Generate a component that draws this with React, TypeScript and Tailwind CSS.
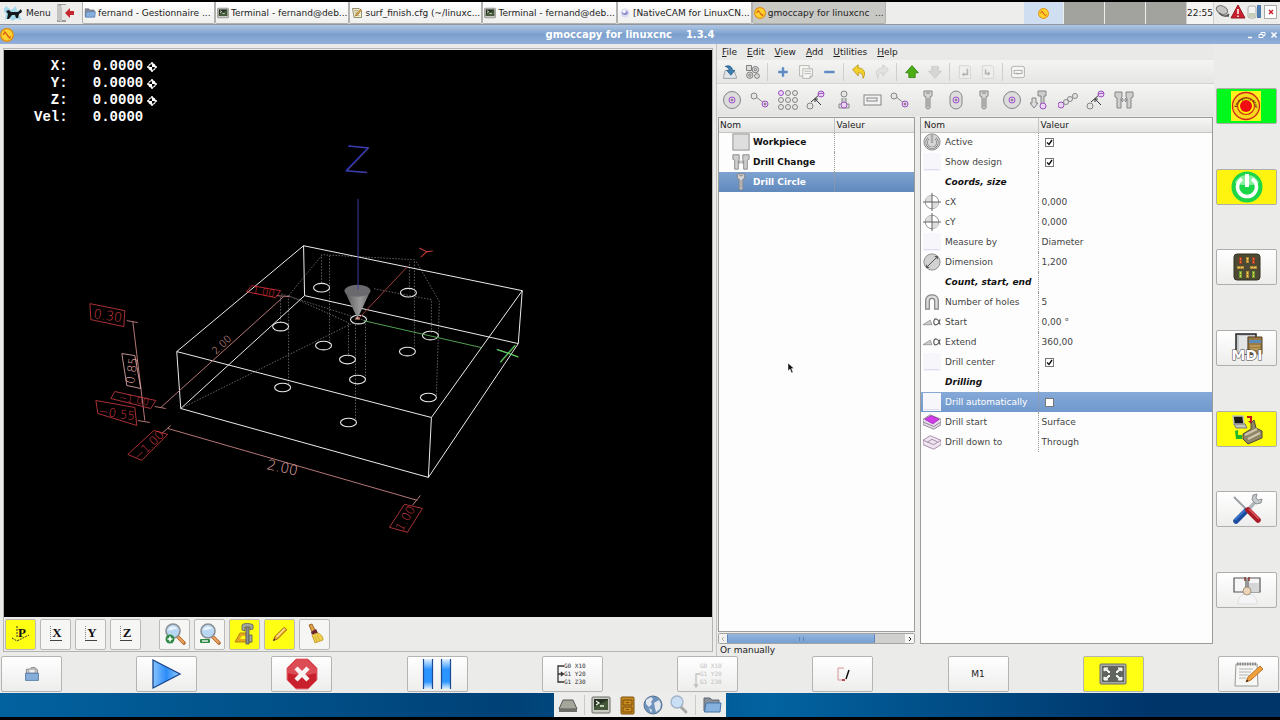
import React from 'react'

type IconProps = { className?: string }

/* ---------- small shared icons ---------- */

function CncLogo({ className = 'size-3' }: IconProps) {
    return (
        <svg viewBox="0 0 16 16" className={className} aria-hidden="true">
            <circle cx="8" cy="8" r="7.2" fill="#ffd22e" stroke="#e08a10" strokeWidth="1.4" />
            <path d="M3.500 8c1-3 3-3 4-1l2 3c1 1.500 2 1 2.800-.500M5 4l6.500 8" fill="none" stroke="#dc5a10" strokeWidth="1.400" />
        </svg>
    )
}

function FolderIcon({ className = 'size-3' }: IconProps) {
    return (
        <svg viewBox="0 0 20 20" className={className} aria-hidden="true">
            <path d="M2 3h6l2 2h7v11H2z" fill="#8a9099" stroke="#5d6670" />
            <path d="M4 8h15l-1 9H2.500z" fill="#86b0de" stroke="#4573a8" />
        </svg>
    )
}

function TerminalIcon({ className = 'size-3' }: IconProps) {
    return (
        <svg viewBox="0 0 20 20" className={className} aria-hidden="true">
            <rect x="1" y="2" width="18" height="16" rx="1" fill="#c9cbc4" stroke="#6b6d66" />
            <rect x="3" y="4" width="14" height="11" fill="#263323" />
            <path d="M3 12L17 5v10H3z" fill="#44573a" />
            <path d="M5 6l3 2-3 2M9 11h4" stroke="#eef5e4" strokeWidth="1.300" fill="none" />
        </svg>
    )
}

function NoteIcon({ className = 'size-3' }: IconProps) {
    return (
        <svg viewBox="0 0 16 16" className={className} aria-hidden="true">
            <path d="M2 2h9l3 3v9H4z" fill="#f3eecb" stroke="#77704a" />
            <path d="M4 5h6M5 8h6M6 11h5" stroke="#8a8467" />
            <path d="M14 4L8 11l-2 1 .500-2L13 3z" fill="#e8a53a" stroke="#8a5a12" strokeWidth=".7" />
        </svg>
    )
}

function PageIcon({ className = 'size-3' }: IconProps) {
    return (
        <svg viewBox="0 0 16 16" className={className} aria-hidden="true">
            <circle cx="8" cy="8" r="6" fill="#dcdcf0" />
            <path d="M4 9c0-4 7-6 8-1-1 3-5 4-8 1z" fill="#8f8fd0" />
            <circle cx="7" cy="6" r="2" fill="#fff" />
        </svg>
    )
}

function Magnifier({ children, className = 'size-6' }: IconProps & { children?: React.ReactNode }) {
    return (
        <svg viewBox="0 0 24 24" className={className} aria-hidden="true">
            <path d="M14 14l7 7" stroke="#a9632a" strokeWidth="3.600" strokeLinecap="round" />
            <path d="M15 15l5.500 5.500" stroke="#f0a35c" strokeWidth="2" strokeLinecap="round" />
            <circle cx="10" cy="9" r="7" fill="#b9d6f2" stroke="#8c8f92" strokeWidth="1.600" />
            <path d="M5 8c1-4 7-5 10-1-3-1-6 2-10 1z" fill="#e9f3fc" />
            {children}
        </svg>
    )
}

/* ---------- task bar ---------- */

const tasks = [
    { label: 'fernand - Gestionnaire ...', icon: <FolderIcon /> },
    { label: 'Terminal - fernand@deb...', icon: <TerminalIcon /> },
    { label: 'surf_finish.cfg (~/linuxc...', icon: <NoteIcon /> },
    { label: 'Terminal - fernand@deb...', icon: <TerminalIcon /> },
    { label: '[NativeCAM for LinuxCN...', icon: <PageIcon /> },
    { label: 'gmoccapy for linuxcnc  ...', icon: <CncLogo />, active: true },
]

function TaskBar() {
    return (
        <div className="flex h-[23px] shrink-0 items-center border-b border-[#8e959c] bg-[#ededec]">
            <button className="flex h-full w-[51px] items-center gap-[2px] pl-1">
                <svg viewBox="0 0 20 16" className="h-4 w-5 shrink-0" aria-hidden="true">
                    <path d="M2 1l5 4 5-4 1 5 5-1-3 5 3 5-6-1-4 2-2-3-5 2 1-6-3-4z" fill="#a4d8ea" />
                    <path d="M2 6l3-1 2 2h7l3-3 1 3-3 2-1 4h-2l-1-3H8l-3 4H3l1-5z" fill="#15181a" />
                </svg>
                Menu
            </button>
            <button aria-label="Leave" className="flex h-full w-[31px] items-center pl-1">
                <svg viewBox="0 0 22 18" className="h-[18px] w-[22px]" aria-hidden="true">
                    <path d="M2 0h9v18H2z" fill="#9b9b99" />
                    <path d="M6 1h8v15H6z" fill="#e6e6e4" />
                    <path d="M2 0l5 3v15l-5-2z" fill="#c3c3c1" />
                    <path d="M10 9l5-5v3h4v4h-4v3z" fill="#c6262e" />
                </svg>
            </button>
            <div className="flex h-full items-center">
                {tasks.map((t, i) => (
                    <button
                        key={i}
                        className={`flex h-full w-[133px] min-w-max items-center gap-[2px] whitespace-pre rounded-b-[2px] border-x border-b border-[#b1b1af] px-px ${t.active ? 'bg-[#c8c8c5]' : 'bg-linear-to-b from-white to-[#efefee]'}`}
                    >
                        <span className="shrink-0">{t.icon}</span>
                        {t.label}
                    </button>
                ))}
            </div>
            <div className="ml-auto flex h-full gap-px">
                <button aria-label="Workspace 1" className="flex w-[39px] items-center justify-center bg-[#cfdff1]">
                    <CncLogo className="size-[11px]" />
                </button>
                <button aria-label="Workspace 2" className="w-10 bg-[#a2a29e]" />
                <button aria-label="Workspace 3" className="w-10 bg-[#a2a29e]" />
                <button aria-label="Workspace 4" className="w-10 bg-[#a2a29e]" />
            </div>
            <time className="flex h-full w-7 items-center justify-center border-x border-[#cfcfcd] bg-[#f4f4f3]">22:55</time>
            <svg viewBox="0 0 66 22" className="h-[22px] w-[66px]" aria-hidden="true">
                <ellipse cx="8" cy="8" rx="6" ry="4" transform="rotate(25 8 8)" fill="#c5c6c2" stroke="#777" />
                <path d="M5 11c4 4 8 4 10 1M9 14h6" stroke="#555" strokeWidth="1.500" fill="none" />
                <path d="M24 3l7 13H17z" fill="#c8202c" stroke="#971620" />
                <path d="M24 7v5M24 13.500v1.500" stroke="#fff" strokeWidth="1.500" />
                <rect x="34" y="4" width="8" height="12" rx="2" fill="#f4f4f4" stroke="#aaa" />
                <path d="M35 11h6v4h-6z" fill="#c5cdb6" />
                <rect x="43" y="3" width="4" height="13" fill="#4f7cae" />
                <rect x="50.500" y="3.500" width="12" height="13" fill="#fff" stroke="#a9a9a9" />
                <path d="M55 8l4 4M59 8l-4 4" stroke="#c8202c" strokeWidth="1.500" />
            </svg>
        </div>
    )
}

function TitleBar() {
    return (
        <header className="flex h-[19px] shrink-0 items-center bg-linear-to-b from-[#b0c7e4] via-[#7ba0cc] to-[#93afdb] pr-[2px]">
            <CncLogo className="size-[14px]" />
            <h1 className="flex-1 whitespace-pre text-center text-[10px] font-bold text-white">gmoccapy for linuxcnc    1.3.4</h1>
            <div className="flex gap-1">
                <button aria-label="Minimize">
                    <svg viewBox="0 0 8 8" className="size-2"><path d="M2 6.500h4" stroke="#fff" strokeWidth="1.500" /></svg>
                </button>
                <button aria-label="Restore">
                    <svg viewBox="0 0 8 8" className="size-2"><path d="M1 3.500h4v3H1zM3 3.500v-2h4v3H5" stroke="#fff" fill="none" /></svg>
                </button>
                <button aria-label="Close">
                    <svg viewBox="0 0 8 8" className="size-2"><path d="M1.500 1.500l5 5M6.500 1.500l-5 5" stroke="#fff" strokeWidth="1.500" /></svg>
                </button>
            </div>
        </header>
    )
}

/* ---------- 3D preview ---------- */

const holes = [
    [322, 288], [409, 293], [281, 327], [359, 320], [431, 336], [348, 360],
    [324, 346], [408, 352], [283, 388], [358, 380], [349, 423], [429, 398],
]

const rapids =
    'M322 283V255L415 260V350M330 256V345M410 290V262M417 262L440 302L437 397M432 333V300L374 289M281 323V297M289 296V385M289 296L322 256M289 296L349 323V357M356 325V420M366 324V380M181 409L356 322M366 321L281 294'

const labels = [
    { text: '0.30', x: 108, y: 316, a: 8, size: 13, box: '90,304 125,311 124,327 91,320', color: '#d23c42' },
    { text: '0.85', x: 132, y: 371, a: -82, size: 12, box: '122,354 135,356 141,389 127,386', color: '#f0b4b4' },
    { text: '−1.00', x: 134, y: 400, a: 10, size: 10, box: '115,392 156,401 151,409 111,399', color: '#d23c42' },
    { text: '−0.55', x: 117, y: 414, a: 9, size: 12, box: '96,401 135,408 137,426 98,414', color: '#d23c42' },
    { text: '−1.00', x: 149, y: 446, a: -44, size: 12, box: '154,431 168,435 142,461 128,455', color: '#d23c42' },
    { text: '1.00', x: 264, y: 292, a: 10, size: 10, box: '252,286 281,291 276,298 247,292', color: '#e03038' },
    { text: '1.00', x: 406, y: 519, a: -60, size: 12, box: '405,505 423,509 408,533 390,528', color: '#d23c42' },
    { text: '2.00', x: 283, y: 468, a: 12, size: 14, color: '#eab0b0' },
    { text: '2.00', x: 222, y: 345, a: -44, size: 10, color: '#eab0b0' },
]

function Preview() {
    return (
        <div className="relative min-h-[400px] flex-1 overflow-hidden bg-black">
            <svg viewBox="4 50 709 567" preserveAspectRatio="xMinYMin meet" className="absolute inset-0 size-full" aria-hidden="true">
                <defs>
                    <linearGradient id="cone">
                        <stop offset="0" stopColor="#555" />
                        <stop offset=".6" stopColor="#9a9a9a" />
                        <stop offset="1" stopColor="#666" />
                    </linearGradient>
                </defs>
                <path d={rapids} fill="none" stroke="#7a7a7a" strokeWidth="0.800" strokeDasharray="1.500 1.500" />
                <path
                    d="M304 246L523 291L432 418L177 352ZM305 296L519 344L429 478L181 409ZM304 246L305 296M523 291L519 344M432 418L429 478M177 352L181 409"
                    fill="none" stroke="#ececec" strokeWidth="1"
                />
                <path d="M133 322L145 421M127 321L138 323M138 421L150 423M161 408L284 297M155 407L166 409M277 296L290 297M168 429L418 501M162 434L171 426M413 506L421 496" stroke="#b47676" fill="none" />
                {holes.map(([x, y]) => (
                    <ellipse key={`${x}-${y}`} cx={x} cy={y} rx="8" ry="4.300" fill="none" stroke="#e8e8e8" strokeWidth="1.100" />
                ))}
                <path d="M345 291L358 319L371 291Z" fill="url(#cone)" />
                <ellipse cx="358" cy="291" rx="13" ry="6" fill="#6a6a6e" />
                <path d="M358.500 199V290" stroke="#3d3d9e" />
                <path d="M359 319L408 267" stroke="#a23c44" />
                <path d="M364 321L482 348" stroke="#4fa050" />
                <path d="M355 320l3-3 3 3z" fill="#e0a090" />
                <g fontFamily="DejaVu Sans, sans-serif" fontWeight="200" textAnchor="middle" dominantBaseline="central">
                    <text x="358" y="160" fontSize="36" fill="#3c3cac" transform="rotate(5 358 160)">Z</text>
                    <text x="427" y="252" fontSize="18" fill="#d04040" transform="rotate(-98 427 252)">Y</text>
                    <text x="508" y="354" fontSize="26" fill="#62c864" transform="rotate(75 508 354)">X</text>
                    {labels.map((l, i) => (
                        <g key={i}>
                            {l.box && <polygon points={l.box} fill="none" stroke={l.color} opacity=".8" />}
                            <text x={l.x} y={l.y} fontSize={l.size} fill={l.color} transform={`rotate(${l.a} ${l.x} ${l.y})`}>{l.text}</text>
                        </g>
                    ))}
                </g>
            </svg>
            <div className="absolute left-[30px] top-2 whitespace-pre font-['Liberation_Mono',monospace] text-[14px] font-bold leading-[17px] text-white">
                {['  X:   0.0000', '  Y:   0.0000', '  Z:   0.0000'].map((row) => (
                    <div key={row} className="flex items-center">
                        {row}
                        <svg viewBox="0 0 10 10" className="ml-1 size-[10px]" aria-hidden="true">
                            <path d="M5 0v10M0 5h10" stroke="#fff" strokeWidth="1.500" />
                            <circle cx="5" cy="5" r="3.800" fill="#fff" />
                            <path d="M5 5V2.200A2.800 2.800 0 002.200 5zM5 5v2.800A2.800 2.800 0 007.800 5z" fill="#000" />
                        </svg>
                    </div>
                ))}
                <div>Vel:   0.0000</div>
            </div>
        </div>
    )
}

function ViewLetter({ letter }: { letter: string }) {
    return (
        <svg viewBox="0 0 28 28" className="size-7" aria-hidden="true">
            {letter === 'P' ? (
                <path d="M10 6v12M5 18l5 3 4-2 8-4" fill="none" stroke="#333" strokeDasharray="2 1" />
            ) : (
                <>
                    <path d="M8.500 6v14" stroke="#888" strokeDasharray="1 1" />
                    <path d="M8 20.500h12" stroke="#444" />
                </>
            )}
            <text x="15" y="17" textAnchor="middle" fontFamily="Liberation Serif, serif" fontWeight="700" fontSize="13" fill="#111">{letter}</text>
        </svg>
    )
}

const toolCls = 'flex size-[31px] items-center justify-center rounded-[2px] border border-[#b9b9b7]'

function PreviewTools() {
    return (
        <div className="flex h-[34px] shrink-0 items-center gap-1 pl-px">
            {['P', 'X', 'Y', 'Z'].map((l) => (
                <button key={l} aria-label={`View ${l}`} className={`${toolCls} ${l === 'P' ? 'bg-[#ffff14]' : 'bg-[#f6f6f5]'}`}>
                    <ViewLetter letter={l} />
                </button>
            ))}
            <span className="w-[10px]" />
            <button aria-label="Zoom in" className={`${toolCls} bg-[#f6f6f5]`}>
                <Magnifier>
                    <circle cx="7" cy="17" r="4.500" fill="#2f8a48" />
                    <path d="M4.500 17h5M7 14.500v5" stroke="#fff" strokeWidth="1.600" />
                </Magnifier>
            </button>
            <button aria-label="Zoom out" className={`${toolCls} bg-[#f6f6f5]`}>
                <Magnifier>
                    <rect x="2" y="17" width="10" height="4" rx="1" fill="#2f8a48" />
                    <path d="M4 19h6" stroke="#fff" strokeWidth="1.300" />
                </Magnifier>
            </button>
            <button aria-label="Dimensions" className={`${toolCls} bg-[#ffff14]`}>
                <svg viewBox="0 0 24 24" className="size-6" aria-hidden="true">
                    <path d="M2 20l5-9h7l5 9z" fill="#e3a81c" stroke="#b88410" />
                    <path d="M7 17l2-3h3l1 3z" fill="#ffff14" />
                    <path d="M13 3h3v19h-3z" fill="#8d9296" stroke="#4d5154" strokeWidth=".8" />
                    <path d="M9 3c1-2 9-2 11 0v4l-3 1V5h-5v4L9 8zM16 13h3v7h-3z" fill="#a4a99c" stroke="#5d6154" strokeWidth=".8" />
                </svg>
            </button>
            <button aria-label="Tool path" className={`${toolCls} bg-[#ffff14]`}>
                <svg viewBox="0 0 24 24" className="size-5" aria-hidden="true">
                    <path d="M4 20l2-5L17 4l3 3L9 18z" fill="#f4b024" stroke="#9c5a26" strokeWidth="1.200" />
                    <path d="M7 15L17 5l1.500 1L9 16z" fill="#fbe28a" />
                    <path d="M4 20l1-2.500L6.500 19z" fill="#333" />
                </svg>
            </button>
            <button aria-label="Clear plot" className={`${toolCls} bg-[#f6f6f5]`}>
                <svg viewBox="0 0 24 24" className="size-6" aria-hidden="true">
                    <path d="M6 3l3-1 3 6-3 2z" fill="#e0a24a" stroke="#a0682a" />
                    <path d="M8 10l5-3 2 4-6 2z" fill="#6a2430" />
                    <path d="M9 13l6-2c4 2 5 4 5 7l-8 3c-1-3-2-5-3-8z" fill="#f0cf4a" stroke="#c8a53a" />
                    <path d="M12 14l2 6M14 13l3 6" stroke="#c8a53a" strokeWidth=".8" />
                </svg>
            </button>
        </div>
    )
}

/* ---------- NativeCAM panel ---------- */

const G = '#858585'
const V = '#9a4fc0'

const hole = (x: number, y: number, color = G, r = 3) => (
    <circle cx={x} cy={y} r={r} fill={color === V ? '#ead6f4' : '#e6e6e6'} stroke={color} strokeWidth="1" />
)

function Glyph({ name, className = 'size-5' }: { name: string; className?: string }) {
    return (
        <svg viewBox="0 0 20 20" className={className} aria-hidden="true" fill="none" stroke={G} strokeWidth="1">
            {glyphs[name]}
        </svg>
    )
}

const glyphs: Record<string, React.ReactNode> = {
    circle: <><circle cx="10" cy="10" r="8.500" fill="#dcdcdc" />{hole(10, 10, V)}<circle cx="10" cy="10" r="1" fill={V} /></>,
    line: <><path d="M5 6l10 8" />{hole(4, 6)}{hole(15, 14, V)}<circle cx="15" cy="14" r="1" fill={V} /></>,
    grid: <>{[3, 10, 17].map((y) => [3, 10, 17].map((x) => <g key={`${x}-${y}`}>{hole(x, y, x === 3 && y === 3 ? V : G, 2.5)}</g>))}</>,
    move: <><path d="M5 12l9-8M15 15L9 9M9 12V9h3" stroke="#333" />{hole(4, 16)}{hole(15, 4, V)}<path d="M12 4l6-1" stroke={V} /></>,
    pin: <><path d="M8 8v6h4V8" fill="#ccc" />{hole(10, 4)}<path d="M5 14h10v4H5z" />{hole(10, 15, V)}</>,
    rect: <><rect x="2" y="5" width="17" height="10" fill="#f2f2f2" /><rect x="5" y="8" width="10" height="3" /></>,
    drill: <path d="M6 1h8v5l-2 1v11l-2 1-2-1V7L6 6zM10 8v9M8 3h4" fill="#d4d4d4" />,
    slot: <><rect x="4" y="1" width="12" height="18" rx="6" fill="#dcdcdc" />{hole(10, 10, V)}<circle cx="10" cy="10" r="1" fill={V} /></>,
    down: <><path d="M2 8h4v5h2l-4 5-4-5h2z" fill="#ddd" /><path d="M8 1h8v5h-2v8h-3V6H8z" fill="#ccc" />{hole(13, 16, V)}</>,
    chain: <>{hole(3, 15, V)}{hole(8, 12, G, 2.5)}{hole(12, 9, G, 2.5)}{hole(17, 6, G, 2.5)}</>,
    change: <><path d="M1 2h7v5l-1 1v10H3V8L1 7zM12 2h7v5l-2 1v10h-4V8l-1-1z" fill="#cfcfcf" /><path d="M7 10h6M9 8l-2 2 2 2M11 8l2 2-2 2" /></>,
    block: <rect x="1" y="1" width="18" height="18" fill="#dedede" stroke="#8a8a8a" />,
    power: <><circle cx="10" cy="10" r="9" fill="#d6d6d6" /><path d="M6 6a6 6 0 108 0M10 2v9" stroke="#777" strokeWidth="2.500" /><path d="M6 6a6 6 0 108 0M10 2v9" stroke="#eee" /></>,
    blank: <><rect x="0" y="0" width="20" height="20" fill="#f7f7fb" stroke="none" /><path d="M1 18.500h17" stroke="#dcd4ea" /></>,
    center: <><circle cx="10" cy="10" r="7.500" fill="#fff" /><path d="M10 10V2.500A7.500 7.500 0 002.500 10zM10 10v7.500a7.500 7.500 0 007.500-7.500z" fill="#ddd" stroke="none" /><path d="M10 0v20M0 10h20" stroke="#555" /></>,
    dimension: <><circle cx="10" cy="10" r="9" fill="#d2d2d2" /><path d="M4 16L16 4M4 16v-3M4 16h3M16 4v3M16 4h-3" stroke="#444" /></>,
    holes: <path d="M3 18V8c0-8 14-8 14 0v10h-4V9c0-4-6-4-6 0v9z" fill="#ddd" strokeWidth="1.400" />,
    angle: <><path d="M0 13h10L8 8z" fill="#ccc" stroke="#999" /><path d="M19 7c-2 7-7 8-7 3s5-5 7 3" stroke="#555" strokeWidth="1.300" /></>,
    start: <><path d="M0 7l8-5 12 5v6l-8 5L0 13z" fill="#e9d9ee" /><path d="M2 7l7-4 9 4-7 5z" fill="#d23be8" stroke="#a030b8" /><path d="M0 10l12 5 8-5" /></>,
    depth: <><path d="M0 8l8-5 12 5v5l-8 5L0 13z" fill="#efe4ef" stroke="#a084a4" /><path d="M0 8l12 5 8-5M5 10l5-3 6 3" stroke="#a084a4" /></>,
}

const toolbar: (React.ReactNode | null)[] = [
    <><path d="M2 16L4 8h11l3 8v2H2z" fill="#e2e5e8" stroke="#8a949c" /><path d="M4 3c5-2 9 0 9 5h3l-5 6-5-6h3c0-3-2-4-5-5z" fill="#3f7fb0" stroke="#2a5f8c" /></>,
    <g stroke="#666" fill="#ddd"><rect x="2" y="2" width="6" height="6" /><circle cx="13" cy="7" r="4" /><circle cx="6" cy="14" r="4" /><circle cx="15" cy="15" r="3" /><circle cx="13" cy="7" r="1.500" /><circle cx="6" cy="14" r="1.500" /></g>,
    null,
    <path d="M10 4v12M4 10h12" stroke="#5d8cc4" strokeWidth="3" />,
    <g fill="#f6f6f4" stroke="#a8a8a6"><path d="M2 2h12v13H2z" /><path d="M6 6h12v9l-3 3H6zM8 9h8M8 12h8M18 15h-3v3" /></g>,
    <path d="M4 10h13" stroke="#5d8cc4" strokeWidth="3" />,
    null,
    <path d="M2 7l7-6v4c8 0 10 7 6 13 0-5-2-7-6-7v4z" fill="#f3d02c" stroke="#b8921a" />,
    <path d="M18 7l-7-6v4c-8 0-10 7-6 13 0-5 2-7 6-7v4z" fill="#e2e2e0" stroke="#ccccca" />,
    null,
    <path d="M10 2l8 9h-4v6H6v-6H2z" fill="#4cae14" stroke="#2f7d0c" />,
    <path d="M10 18l8-9h-4V3H6v6H2z" fill="#d6d6d4" stroke="#c8c8c6" />,
    null,
    <g><path d="M3 2h12l2 2v14H3z" fill="#eeeeec" stroke="#d0d0ce" /><path d="M12 6v6H9v-2l-3 3 3 3v-2h5V6z" fill="#b4b4b2" stroke="none" /></g>,
    <g><path d="M3 2h12l2 2v14H3z" fill="#eeeeec" stroke="#d0d0ce" /><path d="M6 7v6h4v2l3-3-3-3v2H8V7z" fill="#b4b4b2" stroke="none" /></g>,
    null,
    <g><rect x="2" y="3" width="16" height="14" rx="2" fill="#f6f6f5" stroke="#a4a4a2" /><path d="M5 12V8h10v4zM8 11l2 2 2-2" stroke="#9a9a98" /></g>,
]

const shapes = ['circle', 'line', 'grid', 'move', 'pin', 'rect', 'line', 'drill', 'slot', 'drill', 'circle', 'down', 'chain', 'move', 'change']

const tree = [
    { name: 'Workpiece', icon: 'block' },
    { name: 'Drill Change', icon: 'change' },
    { name: 'Drill Circle', icon: 'drill', selected: true },
]

type Param = { name: string; icon?: string; value?: string; check?: boolean; selected?: boolean }

const params: Param[] = [
    { name: 'Active', icon: 'power', check: true },
    { name: 'Show design', icon: 'blank', check: true },
    { name: 'Coords, size' },
    { name: 'cX', icon: 'center', value: '0,000' },
    { name: 'cY', icon: 'center', value: '0,000' },
    { name: 'Measure by', icon: 'blank', value: 'Diameter' },
    { name: 'Dimension', icon: 'dimension', value: '1,200' },
    { name: 'Count, start, end' },
    { name: 'Number of holes', icon: 'holes', value: '5' },
    { name: 'Start', icon: 'angle', value: '0,00 °' },
    { name: 'Extend', icon: 'angle', value: '360,00' },
    { name: 'Drill center', icon: 'blank', check: true },
    { name: 'Drilling' },
    { name: 'Drill automatically', icon: 'blank', check: false, selected: true },
    { name: 'Drill start', icon: 'start', value: 'Surface' },
    { name: 'Drill down to', icon: 'depth', value: 'Through' },
]

const headCls = 'h-[14px] border-b border-[#c4c4c2] bg-linear-to-b from-[#f6f6f5] to-[#e4e4e2] p-0 text-left font-normal'

function NativeCam() {
    return (
        <section className="flex flex-col border-l border-[#c4c4c2]">
            <nav className="flex h-4 shrink-0 items-center gap-2 bg-[#e9e9e8] pl-[5px]">
                {['File', 'Edit', 'View', 'Add', 'Utilities', 'Help'].map((m) => (
                    <button key={m} className="px-px leading-3 first:pl-0"><span className="underline">{m[0]}</span>{m.slice(1)}</button>
                ))}
            </nav>
            <div className="flex h-6 shrink-0 items-center border-b border-[#d4d4d2] bg-linear-to-b from-[#f4f4f3] to-[#e6e6e4] pl-px">
                {toolbar.map((art, i) =>
                    art ? (
                        <button key={i} aria-label={`Tool ${i + 1}`} className="flex w-[23px] justify-center">
                            <svg viewBox="0 0 20 20" className="size-4" fill="none">{art}</svg>
                        </button>
                    ) : (
                        <span key={i} className="mx-[3px] h-[18px] w-px bg-[#cfcfcd]" />
                    ),
                )}
            </div>
            <div className="flex h-8 shrink-0 items-center bg-linear-to-b from-[#f4f4f3] to-[#e4e4e2] pl-px">
                {shapes.map((s, i) => (
                    <button key={i} aria-label={`Add ${s}`} className="flex w-7 justify-center"><Glyph name={s} /></button>
                ))}
            </div>

            <div className="flex min-h-0 flex-1 gap-[5px] px-px pt-px">
                <div className="flex w-[197px] flex-col">
                    <div className="flex-1 border border-[#9c9c9a] bg-[#fdfdfd]">
                        <table className="w-full table-fixed border-collapse">
                            <colgroup><col className="w-[115px]" /><col /></colgroup>
                            <thead>
                                <tr>
                                    <th className={`${headCls} pl-px`}>Nom</th>
                                    <th className={`${headCls} border-l border-l-[#c4c4c2] pl-[2px]`}>Valeur</th>
                                </tr>
                            </thead>
                            <tbody>
                                {tree.map((row) => (
                                    <tr key={row.name} className={`h-5 font-bold ${row.selected ? 'bg-linear-to-b from-[#7fa3d0] to-[#6089bd] text-white' : 'text-[#111]'}`}>
                                        <td className="p-0">
                                            <span className="flex items-center gap-[3px] whitespace-nowrap pl-[13px]">
                                                <Glyph name={row.icon} className="size-[18px]" />
                                                {row.name}
                                            </span>
                                        </td>
                                        <td className="border-l border-dotted border-[#9a9a98] p-0" />
                                    </tr>
                                ))}
                            </tbody>
                        </table>
                    </div>
                    <div className="mt-px flex h-[11px] items-stretch rounded-[2px] border border-[#a4a4a2] bg-[#d0d0ce]">
                        <button aria-label="Scroll left" className="flex w-2 items-center justify-center bg-[#f2f2f1] text-[#aaa]">
                            <svg viewBox="0 0 6 6" className="size-[6px]"><path d="M4 1L2 3l2 2" fill="none" stroke="currentColor" /></svg>
                        </button>
                        <span className="flex w-[148px] items-center justify-center rounded-[1px] border-x border-[#5d87ba] bg-linear-to-b from-[#94b5df] to-[#769fd2]">
                            <span className="h-1 w-[5px] border-x border-[#5d87ba]" />
                        </span>
                        <button aria-label="Scroll right" className="ml-auto flex w-[9px] items-center justify-center bg-[#f6f6f5] text-[#222]">
                            <svg viewBox="0 0 6 6" className="size-[6px]"><path d="M2 1l2 2-2 2" fill="none" stroke="currentColor" /></svg>
                        </button>
                    </div>
                </div>

                <div className="flex-1 border border-[#9c9c9a] bg-[#fdfdfd]">
                    <table className="w-full table-fixed border-collapse text-[#444]">
                        <colgroup><col className="w-[117px]" /><col /></colgroup>
                        <thead>
                            <tr className="text-[#222]">
                                <th className={`${headCls} pl-[3px]`}>Nom</th>
                                <th className={`${headCls} border-l border-l-[#c4c4c2] pl-[2px]`}>Valeur</th>
                            </tr>
                        </thead>
                        <tbody>
                            {params.map((p) => (
                                <tr key={p.name} className={`h-5 ${p.selected ? 'bg-linear-to-b from-[#86a9d8] to-[#7099ce] text-white' : ''}`}>
                                    <td className="p-0">
                                        <span className="flex items-center gap-1 whitespace-nowrap pl-[2px]">
                                            {p.icon ? <Glyph name={p.icon} className="size-[18px]" /> : <span className="w-[18px]" />}
                                            {p.icon ? p.name : <strong className="italic text-[#111]">{p.name}</strong>}
                                        </span>
                                    </td>
                                    <td className="border-l border-dotted border-[#9a9a98] p-0 pl-[3px]">
                                        {p.check === undefined ? (
                                            p.value
                                        ) : (
                                            <label className="relative ml-[3px] block size-[9px]">
                                                <input
                                                    type="checkbox"
                                                    aria-label={p.name}
                                                    defaultChecked={p.check}
                                                    className="peer block size-[9px] appearance-none border border-[#777] bg-white"
                                                />
                                                <svg viewBox="0 0 9 9" className="pointer-events-none absolute inset-0 hidden size-[9px] peer-checked:block">
                                                    <path d="M2 4.500l2 2L7 2" fill="none" stroke="#111" strokeWidth="1.400" />
                                                </svg>
                                            </label>
                                        )}
                                    </td>
                                </tr>
                            ))}
                        </tbody>
                    </table>
                </div>
            </div>
            <p className="h-3 shrink-0 pl-[3px] leading-3">Or manually</p>
        </section>
    )
}

/* ---------- right side mode buttons ---------- */

const gray = 'bg-linear-to-b from-white to-[#ededec]'

const modes = [
    {
        label: 'Emergency stop', cls: 'bg-[#00f81c]',
        art: (
            <>
                <rect x="0" y="1" width="30" height="30" fill="#fbf21c" />
                <circle cx="15" cy="16" r="13.500" fill="#f8d81c" stroke="#d02818" strokeWidth="1.300" />
                <circle cx="15" cy="16" r="8.500" fill="#fff000" stroke="#d02818" strokeWidth="1.200" />
                <circle cx="15" cy="16" r="6" fill="#f00c10" />
                <path id="arc" d="M5.500 17.500A9.600 9.600 0 0124.500 17.500" fill="none" />
                <text fontSize="3" fontWeight="700" fill="#4a1808"><textPath href="#arc">Emergency Stop</textPath></text>
            </>
        ),
    },
    {
        label: 'Machine on', cls: 'bg-[#fff310]',
        art: (
            <>
                <circle cx="16" cy="16" r="15.500" fill="#1cd648" />
                <path d="M4 12a13 13 0 0124 0c-8 3-16 3-24 0z" fill="#8af0a0" />
                <path d="M11 8a9.500 9.500 0 1010 0" fill="none" stroke="#fff" strokeWidth="3.500" />
                <path d="M16 3v13" stroke="#fff" strokeWidth="4" />
            </>
        ),
    },
    {
        label: 'Manual mode', cls: gray,
        art: (
            <>
                <rect x="3" y="3" width="26" height="26" rx="3" fill="#4c4a34" stroke="#33301f" />
                <path d="M8 6h3v7H8zM21 6h3v7h-3z" fill="#a63c1e" />
                <path d="M15 6h3v6h-3zM6 15h7v3H6zM19 15h7v3h-7zM15 20h3v7h-3z" fill="#b28a34" />
                <path d="M8 20h3v7H8zM21 20h3v7h-3z" fill="#6f9e2c" />
                <path d="M16.500 7v4M16.500 21v5M7 16.500h5M20 16.500h5M9.500 21v5M22.500 21v5" stroke="#e6d05a" strokeDasharray="2 1" />
                <path d="M9.500 7v5M22.500 7v5" stroke="#e07a4a" strokeDasharray="2 1" />
            </>
        ),
    },
    {
        label: 'MDI mode', cls: gray,
        art: (
            <>
                <path d="M5 2h20v20H5z" fill="#c4c8ca" stroke="#222" strokeWidth="1.500" />
                <path d="M8 4h8v18H8z" fill="#e4e6e6" />
                <path d="M17 5h14v17H17z" fill="#9a7a42" stroke="#554020" />
                <path d="M18 8h12v3H18z" fill="#5a8cba" />
                <path d="M19 14h10M19 17h10" stroke="#dcb868" />
                <text x="16" y="28" textAnchor="middle" fontSize="14" fontWeight="700" fontFamily="DejaVu Sans, sans-serif" fill="#fff" stroke="#444" strokeWidth="1" paintOrder="stroke">MDI</text>
            </>
        ),
    },
    {
        label: 'Auto mode', cls: 'bg-[#ffff0c]',
        art: (
            <>
                <path d="M2 3h10l1 8H3z" fill="#181818" stroke="#c4c4ba" strokeWidth="1.500" />
                <path d="M3 11h11l2 4H5z" fill="#c4c4ba" stroke="#777" />
                <path d="M16 3h5v5h2l-3 3-3-3h2V5h-3z" fill="#c4181c" />
                <path d="M4 18l3-1v5h4v4H5z" fill="#1cb828" />
                <path d="M12 21l8-5V10l3-3 2 8 6 3v7l-14 6-5-5z" fill="#8e8468" stroke="#4e4834" />
                <path d="M14 22l12-6M17 26l12-6" stroke="#cfc6a8" strokeWidth="2" />
            </>
        ),
    },
    {
        label: 'Settings', cls: gray,
        art: (
            <>
                <path d="M3 4l14 14" stroke="#9aa0a4" strokeWidth="2" />
                <path d="M17 17l9-10" stroke="#b0b6ba" strokeWidth="3.500" />
                <path d="M22 2l-1 5 4 4 5-1 1-4-4 1-2-2 1-4z" fill="#c4c9cc" stroke="#787e82" strokeWidth=".8" />
                <path d="M15 18L5 28" stroke="#1a4ca0" strokeWidth="5.500" strokeLinecap="round" />
                <path d="M14 17L4 27" stroke="#3f7fd8" strokeWidth="1.500" />
                <path d="M17 17l10 10" stroke="#a81c28" strokeWidth="5.500" strokeLinecap="round" />
                <path d="M18 16l10 10" stroke="#e05a5e" strokeWidth="1.500" />
            </>
        ),
    },
    {
        label: 'User page', cls: gray,
        art: (
            <>
                <path d="M3 4h12v14H3zM17 4h12v14H17z" fill="#f6f6f6" stroke="#555" strokeWidth="1.200" />
                <path d="M18 9h10v9H18z" fill="#d4d6d8" />
                <path d="M14 3v4M18 3v4" stroke="#8a3a34" strokeWidth="1.500" />
                <path d="M7 30c0-8 4-10 9-10s10 2 10 10z" fill="#f4f4f6" stroke="#dedee2" />
                <circle cx="16" cy="17" r="4" fill="#ecd4b8" stroke="#8a7862" strokeWidth=".7" />
            </>
        ),
    },
]

function ModeBar() {
    return (
        <aside className="flex flex-col items-start justify-between bg-[#ebebea] pb-12 pl-[2px] pt-11">
            {modes.map((m) => (
                <button key={m.label} aria-label={m.label} className={`flex h-9 w-[61px] items-center justify-center rounded-[2px] border border-[#aeaeac] ${m.cls}`}>
                    <svg viewBox="0 0 32 32" className="size-8" aria-hidden="true">{m.art}</svg>
                </button>
            ))}
        </aside>
    )
}

/* ---------- bottom buttons ---------- */

function GCode({ color, children }: { color: string; children: React.ReactNode }) {
    return (
        <svg viewBox="0 0 40 32" className="h-8 w-10" aria-hidden="true" fill={color} stroke="none">
            <g fontFamily="DejaVu Sans Mono, monospace" fontSize="6">
                <text x="12" y="10">G0 X10</text>
                <text x="12" y="18">G1 Y20</text>
                <text x="12" y="26">G1 Z30</text>
            </g>
            <g fill="none" stroke={color} strokeWidth="1.300">{children}</g>
        </svg>
    )
}

const actions = [
    { label: 'Open file', art: <svg viewBox="0 0 20 20" className="size-4"><path d="M3 4h5l1-2h5l3 3v8H3z" fill="#c8c8c6" stroke="#777" /><path d="M6 4h8v5H6z" fill="#eee" stroke="#999" /><path d="M2 9h16v9H2z" fill="#86aedb" stroke="#456f9f" /></svg> },
    {
        label: 'Run', art: (
            <svg viewBox="0 0 32 32" className="size-8">
                <defs><linearGradient id="run"><stop offset="0" stopColor="#88c4ff" /><stop offset=".5" stopColor="#2c8cf8" /><stop offset="1" stopColor="#9cd0ff" /></linearGradient></defs>
                <path d="M2 2l27 14L2 30z" fill="url(#run)" stroke="#16448c" strokeWidth="1.300" />
            </svg>
        ),
    },
    { label: 'Stop', art: <svg viewBox="0 0 32 32" className="size-8"><path d="M10 1h12l9 9v12l-9 9H10l-9-9V10z" fill="#c8202c" stroke="#e4767c" /><path d="M2 15V10l8-8h12l8 8v5c-9 3-19 3-28 0z" fill="#dc4c54" /><path d="M10 10l12 12M22 10L10 22" stroke="#f8f4f4" strokeWidth="4.500" /></svg> },
    {
        label: 'Pause', art: (
            <svg viewBox="0 0 32 32" className="size-8">
                <defs><linearGradient id="bar" x2="0" y2="1"><stop offset="0" stopColor="#e4f2ff" /><stop offset=".35" stopColor="#2c94ff" /><stop offset=".75" stopColor="#2c94ff" /><stop offset="1" stopColor="#e4f2ff" /></linearGradient></defs>
                <path d="M2 1h10v30H2zM20 1h10v30H20z" fill="url(#bar)" />
                <path d="M2.500 1v30M11.500 1v30M20.500 1v30M29.500 1v30" stroke="#1a4a94" strokeWidth="1.200" />
            </svg>
        ),
    },
    { label: 'Step', art: <GCode color="#333"><path d="M12 8H6v16h6M6 16h6M9 14l2 2-2 2" /></GCode> },
    { label: 'Run from line', art: <GCode color="#c0c0be"><path d="M12 16H8v12M6 26l2 3 2-3" /></GCode> },
    { label: 'Optional blocks', art: <svg viewBox="0 0 20 20" className="size-5" fill="none"><path d="M11 4H5v12h5" stroke="#d49494" /><path d="M16 6l-3 9" stroke="#111" strokeWidth="1.500" /><path d="M9 16h3" stroke="#a01818" strokeWidth="1.500" /></svg> },
    { label: 'M1', art: <span>M1</span> },
    { label: 'Fullscreen', active: true, art: <svg viewBox="0 0 32 32" className="size-8"><rect x="3" y="6" width="26" height="20" rx="1" fill="#a8aaa6" stroke="#6a6e6c" /><path d="M5 8h22v16H5z" fill="#60665f" /><path d="M7 13v-3h4l-1.500 1L13 14l-1 1-3-3zM25 13v-3h-4l1.500 1L19 14l1 1 3-3zM7 19v3h4l-1.500-1L13 18l-1-1-3 3zM25 19v3h-4l1.500-1L19 18l1-1 3 3z" fill="#f4f4f2" stroke="#f4f4f2" /></svg> },
    { label: 'Edit', art: <svg viewBox="0 0 32 32" className="size-8"><path d="M4 6h21l1 22H3z" fill="#f7f7f5" stroke="#999" /><path d="M5 6h20" stroke="#888" strokeWidth="3" strokeDasharray="1.500 1" /><path d="M7 11h14M7 14h12M7 17h10M7 20h7" stroke="#b4b4b4" /><path d="M14 24l2-5L28 8l3 3-12 11z" fill="#f0a03c" stroke="#b87428" /><path d="M14 24l1-2.500 1.500 1.500z" fill="#222" /></svg> },
]

function ActionBar() {
    return (
        <div className="flex h-[37px] shrink-0 items-start justify-between bg-[#ebebea] px-px">
            {actions.map((a) => (
                <button
                    key={a.label}
                    aria-label={a.label}
                    className={`flex h-9 w-[61px] items-center justify-center rounded-[2px] border border-[#b4b4b2] ${a.active ? 'bg-[#ffff14]' : gray}`}
                >
                    {a.art}
                </button>
            ))}
        </div>
    )
}

function Dock() {
    const sep = <span className="h-5 w-px bg-[#c9c9c7]" />
    return (
        <footer className="flex h-6 shrink-0 justify-center bg-[linear-gradient(to_right,#02629f,#004176_40%,#0263a0_60%,#00356a_90%)]">
            <div className="flex w-[172px] items-center justify-between bg-[#ededec] px-1">
                <button aria-label="Show desktop">
                    <svg viewBox="0 0 20 20" className="size-5"><path d="M5 5h10l4 9H1z" fill="#a4a69c" stroke="#555" /><path d="M1 14h18v3H1z" fill="#6c6e68" /></svg>
                </button>
                {sep}
                <button aria-label="Terminal"><TerminalIcon className="size-5" /></button>
                <button aria-label="File manager">
                    <svg viewBox="0 0 20 20" className="size-5"><rect x="4" y="2" width="13" height="17" rx="1" fill="#c98a1e" stroke="#7d5010" /><path d="M6 5h9v5H6zM6 12h9v5H6zM9 7.500h3M9 14.500h3" fill="none" stroke="#7d5010" /></svg>
                </button>
                <button aria-label="Web browser">
                    <svg viewBox="0 0 20 20" className="size-5"><circle cx="10" cy="10" r="9" fill="#6f93bd" stroke="#55718f" /><path d="M3 5l5-3 2 2-2 3 1 2-3 3-3-3zM11 8l5-3 2 4-1 5-4 3-1-4zM6 13l3 2-1 3z" fill="#e2e8ee" /></svg>
                </button>
                <button aria-label="Search">
                    <svg viewBox="0 0 20 20" className="size-5"><path d="M12 12l5 5" stroke="#a8a8a6" strokeWidth="3" strokeLinecap="round" /><circle cx="8" cy="7" r="6" fill="#c9dff4" stroke="#9fb2c6" strokeWidth="1.300" /></svg>
                </button>
                {sep}
                <button aria-label="Home folder"><FolderIcon className="size-5" /></button>
            </div>
        </footer>
    )
}

export default function App() {
    return (
        <div className="flex min-h-screen flex-col border-b-[3px] border-t-2 border-black bg-[#ebebea] font-['DejaVu_Sans',sans-serif] text-[9px] leading-3 text-[#222]">
            <TaskBar />
            <TitleBar />
            <main className="relative grid flex-1 grid-cols-[minmax(0,1fr)_498px_66px]">
                <section className="flex flex-col px-[3px] pb-1 pt-1">
                    <div className="flex flex-1 flex-col border border-[#b4b4b2] pt-px">
                        <Preview />
                        <PreviewTools />
                    </div>
                </section>
                <NativeCam />
                <ModeBar />
                <svg viewBox="0 0 8 12" className="pointer-events-none absolute left-[787px] top-[318px] h-3 w-2" aria-hidden="true">
                    <path d="M1 1v8l2-2 1.500 4 1.500-.700L4.500 6.500H7z" fill="#111" stroke="#fff" strokeWidth=".5" />
                </svg>
            </main>
            <ActionBar />
            <Dock />
        </div>
    )
}
